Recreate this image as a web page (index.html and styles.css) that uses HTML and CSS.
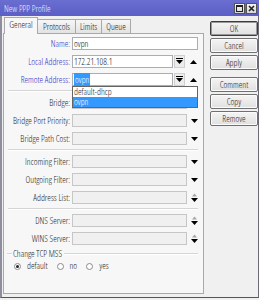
FILE: index.html
```html
<!DOCTYPE html>
<html lang="en">
<head>
    <meta charset="UTF-8">
    <title>New PPP Profile</title>
    <link rel="stylesheet" href="styles.css">
</head>
<body>
    <div class="window">
        <div class="titlebar">
            <span class="title">New PPP Profile</span>
            <div class="winbtns">
                <span class="wbtn"><svg width="7" height="7"><rect x="0.5" y="0.5" width="6" height="6" fill="none" stroke="#222"/><rect x="0" y="0" width="7" height="2" fill="#222"/></svg></span>
                <span class="wbtn"><svg width="7" height="7"><path d="M1 1L6 6M6 1L1 6" stroke="#222" stroke-width="1.6"/></svg></span>
            </div>
        </div>
        <div class="frame">
            <div class="main">
                <div class="tabs">
                    <div class="tab active t-general">General</div>
                    <div class="tab t-protocols">Protocols</div>
                    <div class="tab t-limits">Limits</div>
                    <div class="tab t-queue">Queue</div>
                </div>
                <div class="panel">
                    <div class="row">
                        <label class="lbl blue">Name:</label>
                        <div class="field wide">ovpn</div>
                    </div>
                    <div class="row">
                        <label class="lbl blue">Local Address:</label>
                        <div class="field short">172.21.108.1</div>
                        <span class="ddbtn"><svg width="7" height="7"><rect x="0" y="0" width="7" height="1"/><path d="M0 2H7L3.5 6Z"/></svg></span>
                        <span class="ico"><svg width="7" height="4"><path d="M0 4L3.5 0L7 4Z"/></svg></span>
                    </div>
                    <div class="row combo-open">
                        <label class="lbl blue">Remote Address:</label>
                        <div class="field short"><span class="sel">ovpn</span></div>
                        <span class="ddbtn"><svg width="7" height="7"><rect x="0" y="0" width="7" height="1"/><path d="M0 2H7L3.5 6Z"/></svg></span>
                        <span class="ico"><svg width="7" height="4"><path d="M0 4L3.5 0L7 4Z"/></svg></span>
                        <ul class="droplist">
                            <li>default-dhcp</li>
                            <li class="picked">ovpn</li>
                        </ul>
                    </div>
                    <div class="sep"></div>
                    <div class="row">
                        <label class="lbl">Bridge:</label>
                        <div class="field mid empty"></div>
                        <span class="ico"><svg width="7" height="4"><path d="M0 0H7L3.5 4Z"/></svg></span>
                    </div>
                    <div class="row">
                        <label class="lbl">Bridge Port Priority:</label>
                        <div class="field mid empty"></div>
                        <span class="ico"><svg width="7" height="4"><path d="M0 0H7L3.5 4Z"/></svg></span>
                    </div>
                    <div class="row">
                        <label class="lbl">Bridge Path Cost:</label>
                        <div class="field mid empty"></div>
                        <span class="ico"><svg width="7" height="4"><path d="M0 0H7L3.5 4Z"/></svg></span>
                    </div>
                    <div class="sep"></div>
                    <div class="row">
                        <label class="lbl">Incoming Filter:</label>
                        <div class="field mid empty"></div>
                        <span class="ico"><svg width="7" height="4"><path d="M0 0H7L3.5 4Z"/></svg></span>
                    </div>
                    <div class="row">
                        <label class="lbl">Outgoing Filter:</label>
                        <div class="field mid empty"></div>
                        <span class="ico"><svg width="7" height="4"><path d="M0 0H7L3.5 4Z"/></svg></span>
                    </div>
                    <div class="row">
                        <label class="lbl">Address List:</label>
                        <div class="field mid empty"></div>
                        <span class="ico"><svg width="7" height="9"><path d="M1 3.5L3.5 0.5L6 3.5Z" fill="#a6a6a6"/><path d="M0 5H7L3.5 9Z"/></svg></span>
                    </div>
                    <div class="sep"></div>
                    <div class="row">
                        <label class="lbl">DNS Server:</label>
                        <div class="field mid empty"></div>
                        <span class="ico"><svg width="7" height="9"><path d="M1 3.5L3.5 0.5L6 3.5Z" fill="#a6a6a6"/><path d="M0 5H7L3.5 9Z"/></svg></span>
                    </div>
                    <div class="row">
                        <label class="lbl">WINS Server:</label>
                        <div class="field mid empty"></div>
                        <span class="ico"><svg width="7" height="9"><path d="M1 3.5L3.5 0.5L6 3.5Z" fill="#a6a6a6"/><path d="M0 5H7L3.5 9Z"/></svg></span>
                    </div>
                    <div class="group">
                        <span class="legend">Change TCP MSS</span>
                    </div>
                    <div class="radios">
                        <span class="radio on"></span><span class="rtext">default</span>
                        <span class="radio"></span><span class="rtext">no</span>
                        <span class="radio"></span><span class="rtext">yes</span>
                    </div>
                </div>
            </div>
            <div class="side">
                <button class="btn default">OK</button>
                <button class="btn">Cancel</button>
                <button class="btn">Apply</button>
                <button class="btn gap">Comment</button>
                <button class="btn">Copy</button>
                <button class="btn">Remove</button>
            </div>
        </div>
    </div>
</body>
</html>
```

FILE: styles.css
```css
* {
    margin: 0;
    padding: 0;
    box-sizing: border-box;
}

body {
    background: #f0f0f0;
    font-family: "Open Sans", "Liberation Sans", Arial, sans-serif;
    font-stretch: 75%;
    font-weight: 340;
    font-size: 9px;
    color: #1a1a1a;
}

.window {
    width: 259px;
    height: 298px;
    display: flex;
    flex-direction: column;
}

.titlebar {
    height: 16px;
    background: linear-gradient(#6a6ed0, #5b5fc6);
    display: flex;
    align-items: center;
    justify-content: space-between;
    padding: 1px 2px 0 4px;
}

.title {
    color: #eeeefc;
    font-size: 9px;
    line-height: 12px;
}

.winbtns {
    display: flex;
    gap: 1px;
    margin-top: -1px;
}

.wbtn {
    width: 11px;
    height: 11px;
    background: linear-gradient(#f4f4f4, #d8d8d8);
    border: 1px solid #555;
    display: flex;
    align-items: center;
    justify-content: center;
}

.frame {
    flex: 1;
    display: flex;
    background: #f0f0f0;
    border-left: 2px solid #8e8e9e;
    border-right: 1px solid #6a6a78;
    border-bottom: 1px solid #555;
    padding-left: 1px;
}

.main {
    width: 201px;
}

.tabs {
    height: 17px;
    display: flex;
    align-items: flex-end;
    padding-left: 1px;
}

.tab {
    height: 14px;
    margin-left: -1px;
    border: 1px solid #a9a9a9;
    border-bottom: none;
    background: linear-gradient(#f6f6f6, #e3e3e3);
    text-align: center;
    line-height: 13px;
}

.tab:first-child {
    margin-left: 0;
}

.tab.active {
    height: 17px;
    margin-bottom: -1px;
    background: #f7f7f7;
    position: relative;
    line-height: 14px;
}

.t-general { width: 34px; }
.t-protocols { width: 39px; }
.t-limits { width: 27px; }
.t-queue { width: 30px; }

.panel {
    height: 261px;
    border: 1px solid #a9a9a9;
    background: #f7f7f7;
}

.row {
    height: 18px;
    padding-top: 3px;
    display: flex;
    align-items: flex-start;
    position: relative;
}

.lbl {
    width: 66px;
    margin-right: 2px;
    text-align: right;
    line-height: 13px;
    white-space: nowrap;
    color: #262626;
}

.lbl.blue {
    color: #3434c4;
}

.field {
    height: 13px;
    border: 1px solid #abadb3;
    background: #fff;
    padding-left: 1px;
    line-height: 11px;
    color: #111;
}

.field.wide { width: 126px; }
.field.short { width: 101px; }
.field.mid { width: 115px; }

.field.empty {
    background: #f0f0f0;
    border-color: #c6c6c6;
}

.sel {
    background: #3399ff;
    color: #fff;
    padding: 0 1px;
}

.ddbtn {
    width: 11px;
    height: 13px;
    margin-left: 1px;
    background: #ececec;
    border: 1px solid #d0d0d0;
    display: flex;
    justify-content: center;
    padding-top: 2px;
}

.ico {
    display: flex;
    align-items: center;
    height: 13px;
    margin-left: 4px;
}

.row .ddbtn + .ico {
    margin-left: 5px;
}

.droplist {
    position: absolute;
    left: 68px;
    top: 16px;
    width: 126px;
    list-style: none;
    background: #fff;
    border: 1px solid #646464;
    z-index: 2;
}

.droplist li {
    height: 10px;
    line-height: 10px;
    padding-left: 1px;
}

.droplist li.picked {
    background: #3399ff;
    color: #fff;
}

.sep {
    height: 5px;
    padding-top: 2px;
}

.sep::before {
    content: "";
    display: block;
    margin-left: 4px;
    width: 190px;
    border-top: 1px solid #d5d5d5;
    border-bottom: 1px solid #fff;
}

.group {
    height: 14px;
    display: flex;
    align-items: center;
    padding-left: 3px;
    width: 194px;
}

.group::before,
.group::after {
    content: "";
    border-top: 1px solid #d5d5d5;
    border-bottom: 1px solid #fff;
}

.group::before {
    width: 5px;
    margin-right: 1px;
}

.group::after {
    flex: 1;
    margin-left: 2px;
}

.legend {
    line-height: 14px;
}

.radios {
    height: 10px;
    display: flex;
    align-items: center;
    padding-left: 10px;
}

.radio {
    width: 7px;
    height: 7px;
    border-radius: 50%;
    border: 1px solid #8a8a8a;
    background: #fff;
    margin-right: 6px;
    position: relative;
}

.radio.on::after {
    content: "";
    position: absolute;
    left: 1px;
    top: 1px;
    width: 3px;
    height: 3px;
    border-radius: 50%;
    background: #222;
}

.rtext {
    margin-right: 9px;
    line-height: 10px;
}

.side {
    width: 48px;
    margin-left: 6px;
    padding-top: 5px;
    display: flex;
    flex-direction: column;
    gap: 2px;
}

.btn {
    height: 15px;
    border: 1px solid #707070;
    border-radius: 2px;
    background: linear-gradient(#f4f4f4, #e0e0e0);
    box-shadow: inset 0 0 0 1px #fbfbfb;
    font-family: inherit;
    font-stretch: 75%;
    font-weight: 340;
    font-size: 9px;
    color: #1e1e1e;
}

.btn.default {
    border-color: #3c3c3c;
    box-shadow: inset 0 0 0 1px #9a9a9a;
}

.btn.gap {
    margin-top: 5px;
}
```
